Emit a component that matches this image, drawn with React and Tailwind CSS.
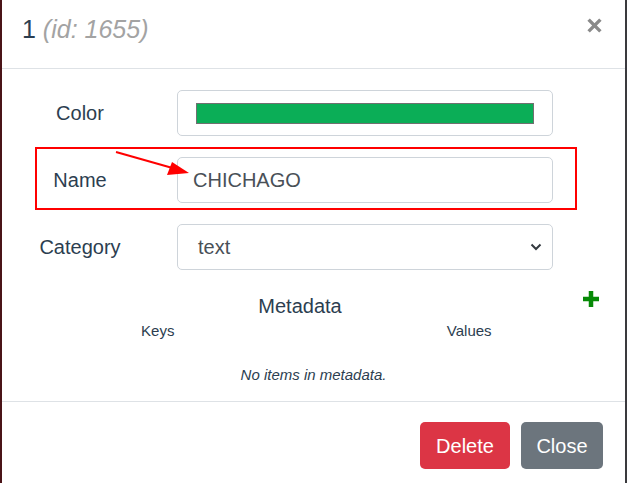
import React from "react";

const labelCls = "w-[120px] shrink-0 text-center text-[20px] leading-[24px] text-[#2c3e50]";
const boxCls =
  "ml-[37px] w-[376px] h-[46px] rounded-[5px] border border-[#ced4da] bg-white flex items-center";

const Row = ({ label, children }) => (
  <div className="flex items-center pl-[18px]">
    <div className={labelCls}>{label}</div>
    {children}
  </div>
);

const App = () => {
  return (
    <div
      className="flex w-[627px] h-[483px] overflow-hidden bg-[#3a3a3e]"
      style={{ fontFamily: '"Liberation Sans", Arial, sans-serif' }}
    >
      <div className="w-[2px] shrink-0 bg-[#4a1418]" />
      <div className="w-[623px] shrink-0 bg-white flex flex-col">
        {/* Header */}
        <div className="h-[69px] shrink-0 border-b border-[#dee2e6] flex items-start justify-between pl-[20px] pr-[23px] pt-[14px]">
          <h5 className="text-[25px] leading-[30px] text-[#2c3e50]">
            1 <span className="italic text-[#a3a3a3]">(id: 1655)</span>
          </h5>
          <button className="mt-[4px] text-[#8a8a8a]">
            <svg width="15" height="15" viewBox="0 0 14 14">
              <path d="M1.5 1.5 L12.5 12.5 M12.5 1.5 L1.5 12.5" stroke="currentColor" strokeWidth="3.2" strokeLinecap="butt" />
            </svg>
          </button>
        </div>

        {/* Body */}
        <div className="h-[332px] shrink-0 pt-[21px] flex flex-col">
          <div className="flex flex-col gap-[21px]">
            <Row label="Color">
              <div className={boxCls + " px-[18px]"}>
                <div className="w-full h-[21px] mt-[1px] border border-[#707070] bg-[#0bae57]" />
              </div>
            </Row>

            <div className="relative">
              <Row label="Name">
                <div className={boxCls + " px-[15px] text-[20px] text-[#495057]"}>CHICHAGO</div>
              </Row>
              {/* annotation */}
              <div className="absolute left-[33px] right-[48px] top-[-10px] bottom-[-7px] border-2 border-[#ff0000] pointer-events-none" />
              <svg className="absolute left-[112px] top-[-7px] pointer-events-none" width="80" height="28" viewBox="0 0 80 28">
                <line x1="2" y1="2" x2="62" y2="19" stroke="#ff0000" strokeWidth="2" />
                <polygon points="75,23 53,25 58,12" fill="#ff0000" />
              </svg>
            </div>

            <Row label="Category">
              <div className={boxCls + " pl-[20px] pr-[10px] justify-between text-[20px] text-[#495057]"}>
                <span>text</span>
                <svg width="12" height="8" viewBox="0 0 12 8">
                  <path d="M1.5 1.5 L6 6 L10.5 1.5" fill="none" stroke="#343a40" strokeWidth="2" />
                </svg>
              </div>
            </Row>
          </div>

          {/* Metadata */}
          <div className="relative mt-[24px]">
            <div className="w-[596px] text-center text-[20px] leading-[24px] text-[#2c3e50]">Metadata</div>
            <svg className="absolute left-[581px] top-[-3px]" width="16" height="16" viewBox="0 0 16 16">
              <path d="M8 0 V16 M0 8 H16" stroke="#078a07" strokeWidth="4.5" />
            </svg>
          </div>
          <div className="grid grid-cols-2 mt-[4px] text-[15px] leading-[18px] text-[#2c3e50]">
            <div className="text-center">Keys</div>
            <div className="text-center">Values</div>
          </div>
          <div className="mt-[26px] text-center italic text-[15px] leading-[18px] text-[#2c3e50]">
            No items in metadata.
          </div>
        </div>

        {/* Footer */}
        <div className="flex-1 border-t border-[#dee2e6] flex justify-end items-start gap-[11px] pt-[20px] pr-[22px]">
          <button className="h-[47px] w-[90px] rounded-[5px] bg-[#dc3545] text-white text-[20px]">Delete</button>
          <button className="h-[47px] w-[82px] rounded-[5px] bg-[#6c757d] text-white text-[20px]">Close</button>
        </div>
      </div>
      <div className="w-[2px] shrink-0 bg-[#3a3a3e]" />
    </div>
  );
};

export default App;
